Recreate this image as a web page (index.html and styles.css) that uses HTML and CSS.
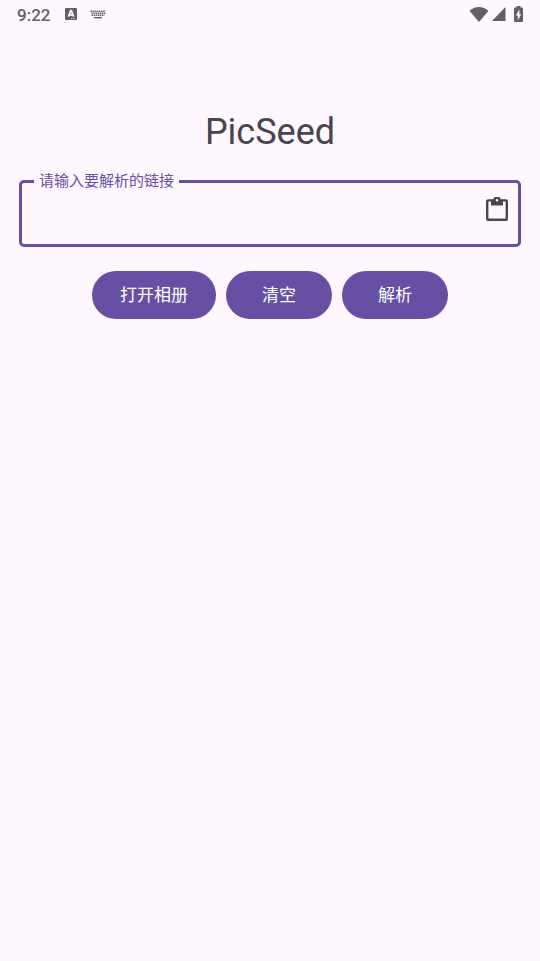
FILE: index.html
```html
<!DOCTYPE html>
<html lang="zh-CN">
<head>
<meta charset="utf-8">
<meta name="viewport" content="width=device-width, initial-scale=1">
<title>PicSeed</title>
<link rel="stylesheet" href="styles.css">
</head>
<body>
<header class="status">
  <div class="status-group status-left">
    <span class="clock">9:22</span>
    <svg class="letter-icon" width="12" height="12" viewBox="0 0 12 12" aria-hidden="true">
      <rect width="12" height="12" rx="1" fill="currentColor"/>
      <path d="M3.400 8.600 5.700 2.600h.6l2.300 6M4.200 6.900h3.600" fill="none" stroke="#fef7ff" stroke-width="1.700"/>
      <path d="M6 10.500h4" stroke="#fef7ff" stroke-width=".7" stroke-dasharray="1 .5"/>
    </svg>
    <svg class="keyboard-icon" width="16" height="9" viewBox="0 0 16 9" aria-hidden="true">
      <g fill="none" stroke="currentColor">
        <path d="M.5 1.200h15M1.300 3.200h14M1.500 5.200h13" stroke-width="1.400" stroke-dasharray="1.500 .6"/>
        <path d="M4 7.700h8" stroke-width="1.400"/>
      </g>
    </svg>
  </div>
  <div class="status-group status-right">
    <svg width="20" height="15" viewBox="0 0 20 15" aria-hidden="true">
      <path d="M.6 4C3.200 1.300 6.400 0 10 0s6.800 1.300 9.400 4L10 15z" fill="currentColor"/>
    </svg>
    <svg width="14" height="14" viewBox="0 0 14 14" aria-hidden="true">
      <path d="M13.500 0v14H0z" fill="currentColor"/>
    </svg>
    <svg class="battery-icon" width="9" height="16" viewBox="0 0 9 16" aria-hidden="true">
      <path d="M2.500 0h4v1.600H8q1 0 1 1V15q0 1-1 1H1q-1 0-1-1V2.600q0-1 1-1h1.500z" fill="currentColor"/>
      <path d="M5.400 3.600 1.800 9.500h2V14.200l3.400-6H5.400z" fill="#fef7ff"/>
    </svg>
  </div>
</header>
<main class="page">
  <h1 class="title">PicSeed</h1>
  <fieldset class="field">
    <legend class="field-legend"><label for="link">请输入要解析的链接</label></legend>
    <div class="field-row">
      <input class="field-input" id="link" type="text">
      <button class="paste" type="button" aria-label="粘贴">
        <svg width="22" height="24" viewBox="0 0 22 24" aria-hidden="true">
          <path d="M20 2.200h-5.200a4 4 0 0 0-7.600 0H2a2 2 0 0 0-2 2V22a2 2 0 0 0 2 2h18a2 2 0 0 0 2-2V4.200a2 2 0 0 0-2-2zM11 2a1.300 1.300 0 1 1 0 2.600A1.300 1.300 0 0 1 11 2zM19.600 21.600H2.400V4.600h2.600V8.400h12V4.600h2.600z" fill="currentColor" fill-rule="evenodd"/>
        </svg>
      </button>
    </div>
  </fieldset>
  <div class="actions">
    <button class="action" type="button">打开相册</button>
    <button class="action" type="button">清空</button>
    <button class="action" type="button">解析</button>
  </div>
</main>
</body>
</html>
```

FILE: styles.css
```css
* {
  box-sizing: border-box;
}

body {
  margin: 0;
  min-height: 100vh;
  background: #fef7ff;
  color: #49454f;
  font-family: Roboto, "Noto Sans CJK SC", sans-serif;
}

.status {
  display: flex;
  justify-content: space-between;
  height: 28px;
  padding: 0 17px;
  color: #625f65;
}

.status-group {
  display: flex;
  align-items: center;
}

.status-left {
  gap: 13px;
}

.status-right {
  gap: 3px;
}

.clock {
  padding-top: 2px;
  font-size: 17px;
  font-weight: 500;
  line-height: 20px;
}

.letter-icon {
  margin-left: 2px;
}

.battery-icon {
  margin-left: 5px;
}

.page {
  padding: 82px 19px 0;
}

.title {
  margin: 0;
  font-size: 36px;
  font-weight: 400;
  line-height: 44px;
  text-align: center;
}

.field {
  min-width: 0;
  margin: 18px 0 24px;
  padding: 0 10px 0 12px;
  border: 3px solid #6750a4;
  border-radius: 5px;
}

.field-legend {
  padding: 0 5px;
  color: #6750a4;
  font-size: 15px;
  line-height: 18px;
}

.field-row {
  display: flex;
  align-items: flex-start;
  height: 54px;
}

.field-input {
  flex: 1;
  min-width: 0;
  height: 40px;
  padding: 0 7px;
  border: 0;
  outline: 0;
  background: transparent;
  color: #1d1b20;
  font: inherit;
  font-size: 19px;
}

.paste {
  display: flex;
  padding: 7px 0;
  border: 0;
  background: transparent;
  color: #49454f;
}

.actions {
  display: flex;
  justify-content: center;
  gap: 10px;
}

.action {
  min-width: 106px;
  height: 48px;
  padding: 0 28px;
  border: 0;
  border-radius: 24px;
  background: #6750a4;
  color: #fff;
  font: inherit;
  font-size: 17px;
  line-height: 24px;
}
```
